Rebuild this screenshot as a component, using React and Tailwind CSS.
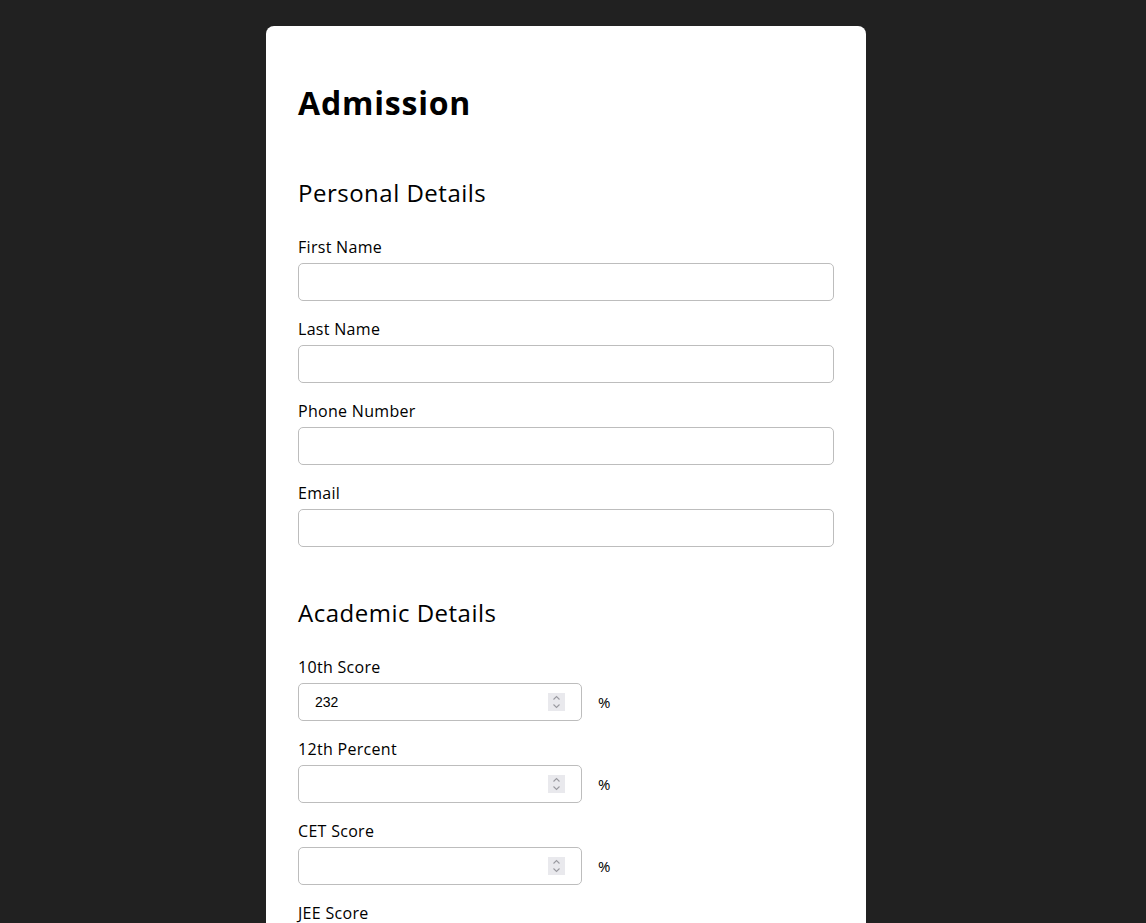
import React from "react";

const personal = ["First Name", "Last Name", "Phone Number", "Email"];
const academic = [
  { label: "10th Score", value: "232" },
  { label: "12th Percent", value: "" },
  { label: "CET Score", value: "" },
  { label: "JEE Score", value: "" },
];

function Spinner() {
  return (
    <div className="absolute right-[16px] top-[9px] w-[17px] h-[18px] bg-[#e9e9ed] flex items-center justify-center">
      <svg width="9" height="14" viewBox="0 0 9 14" fill="none" stroke="#9a9aa0" strokeWidth="1.1">
        <path d="M1.5 4.5 L4.5 1.5 L7.5 4.5" />
        <path d="M1.5 9.5 L4.5 12.5 L7.5 9.5" />
      </svg>
    </div>
  );
}

function Field({ label }) {
  return (
    <div className="mb-4">
      <label className="block text-base leading-6 mb-1 tracking-[0.3px]">{label}</label>
      <input
        type="text"
        className="block w-full h-[38px] border border-[#bdbdbd] rounded-[5px] px-4 text-sm outline-none"
      />
    </div>
  );
}

function ScoreField({ label, value }) {
  return (
    <div className="mb-4">
      <label className="block text-base leading-6 mb-1 tracking-[0.3px]">{label}</label>
      <div className="flex items-center">
        <div className="relative w-[284px] h-[38px] border border-[#bdbdbd] rounded-[5px] flex items-center px-4">
          <span className="text-sm text-black" style={{ fontFamily: "'Liberation Sans', Arial, sans-serif" }}>
            {value}
          </span>
          <Spinner />
        </div>
        <span className="ml-4 text-[15px]">%</span>
      </div>
    </div>
  );
}

export default function App() {
  return (
    <div
      className="min-h-screen bg-[#212121] flex justify-center pt-[26px] pr-[14px] text-black"
      style={{ fontFamily: "'Open Sans', sans-serif" }}
    >
      <div className="w-[600px] bg-white rounded-t-[8px] px-8 pt-[53px] pb-16">
        <h1 className="text-[32px] leading-[48px] font-bold tracking-[0.8px]">Admission</h1>

        <h2 className="text-2xl leading-9 mt-12 mb-6 tracking-[0.5px]">Personal Details</h2>
        {personal.map((l) => (
          <Field key={l} label={l} />
        ))}

        <h2 className="text-2xl leading-9 mt-12 mb-6 tracking-[0.5px]">Academic Details</h2>
        {academic.map((a) => (
          <ScoreField key={a.label} label={a.label} value={a.value} />
        ))}
      </div>
    </div>
  );
}
